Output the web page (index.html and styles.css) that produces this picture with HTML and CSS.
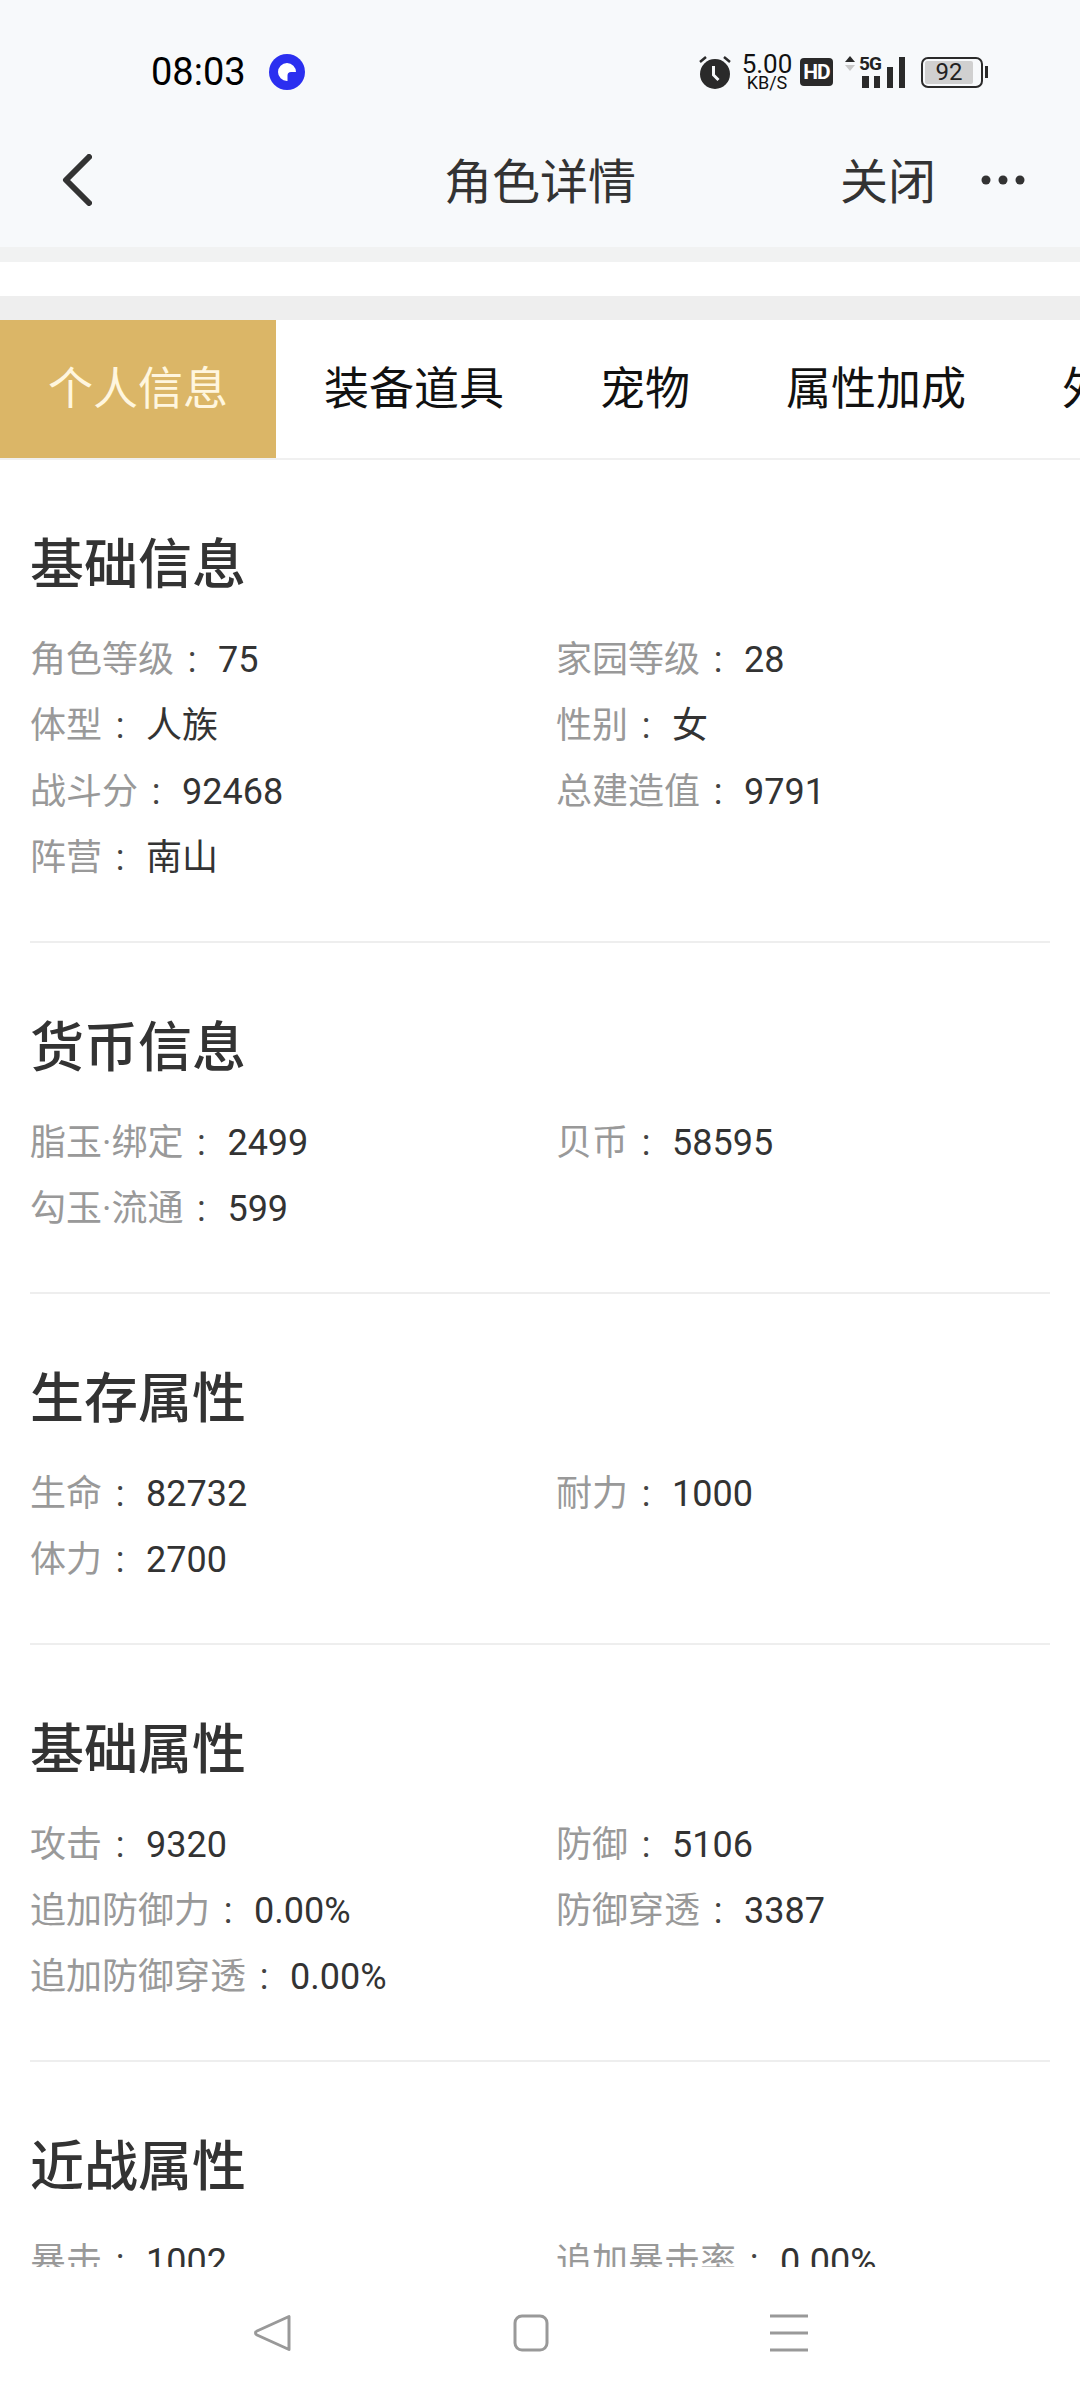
FILE: index.html
```html
<!DOCTYPE html>
<html>

<head>
  <title>角色详情</title>
  <link rel="stylesheet" href="styles.css">
</head>

<body>
  <div class="screen">
    <div class="topbar">
      <div class="status">
        <span class="time">08:03</span>
        <svg class="app-dot" width="36" height="36" viewBox="0 0 36 36">
          <circle cx="18" cy="18" r="18" fill="#2b2ff0" />
          <path d="M18 9a9 9 0 0 1 9 9h-5a3.500 3.500 0 0 0-3.500 3.500V27H18a9 9 0 0 1 0-18z" fill="#fff" />
        </svg>
        <div class="status-right">
          <svg width="34" height="36" viewBox="0 0 34 36">
            <circle cx="17" cy="20" r="15" fill="#2a2a2a" />
            <path d="M15.500 12v9l5 5" fill="none" stroke="#f7f9fb" stroke-width="3" />
            <path d="M2 8l6-5M32 8l-6-5" stroke="#2a2a2a" stroke-width="2.500" fill="none" />
          </svg>
          <div class="speed"><span class="speed-num">5.00</span><span class="speed-unit">KB/S</span></div>
          <span class="hd">HD</span>
          <div class="signal">
            <svg class="arrows" width="10" height="16" viewBox="0 0 10 16">
              <path d="M5 0l5 6H0z" fill="#2a2a2a" />
              <path d="M5 15l5-6H0z" fill="#c8c8c8" />
            </svg>
            <span class="five-g">5G</span>
            <svg class="bars" width="44" height="32" viewBox="0 0 44 32">
              <rect x="0" y="20" width="7" height="12" fill="#2a2a2a" />
              <rect x="12" y="20" width="6" height="12" fill="#2a2a2a" />
              <rect x="25" y="11" width="6" height="21" fill="#2a2a2a" />
              <rect x="37" y="1" width="6" height="31" fill="#2a2a2a" />
            </svg>
          </div>
          <div class="battery">
            <div class="battery-body"><span class="battery-level">92</span></div>
            <div class="battery-cap"></div>
          </div>
        </div>
      </div>
      <div class="navrow">
        <svg class="back" width="30" height="52" viewBox="0 0 30 52">
          <path d="M27 3L4 26l23 23" fill="none" stroke="#333" stroke-width="6" stroke-linecap="round" stroke-linejoin="round" />
        </svg>
        <span class="nav-title">角色详情</span>
        <span class="nav-close">关闭</span>
        <svg class="more" width="44" height="10" viewBox="0 0 44 10">
          <circle cx="5" cy="5" r="4.500" fill="#333" />
          <circle cx="22" cy="5" r="4.500" fill="#333" />
          <circle cx="39" cy="5" r="4.500" fill="#333" />
        </svg>
      </div>
    </div>
    <div class="strip"></div>
    <div class="gap-white"></div>
    <div class="gap-grey"></div>

    <div class="tabs">
      <div class="tab active">个人信息</div>
      <div class="tab">装备道具</div>
      <div class="tab">宠物</div>
      <div class="tab">属性加成</div>
      <div class="tab">外观</div>
    </div>

    <div class="content">
      <div class="section">
        <h2 class="section-title">基础信息</h2>
        <div class="grid">
          <div class="item"><span class="label">角色等级<span class="colon">:</span></span><span class="value">75</span></div>
          <div class="item"><span class="label">家园等级<span class="colon">:</span></span><span class="value">28</span></div>
          <div class="item"><span class="label">体型<span class="colon">:</span></span><span class="value">人族</span></div>
          <div class="item"><span class="label">性别<span class="colon">:</span></span><span class="value">女</span></div>
          <div class="item"><span class="label">战斗分<span class="colon">:</span></span><span class="value">92468</span></div>
          <div class="item"><span class="label">总建造值<span class="colon">:</span></span><span class="value">9791</span></div>
          <div class="item"><span class="label">阵营<span class="colon">:</span></span><span class="value">南山</span></div>
        </div>
      </div>
      <div class="section">
        <h2 class="section-title">货币信息</h2>
        <div class="grid">
          <div class="item"><span class="label">脂玉·绑定<span class="colon">:</span></span><span class="value">2499</span></div>
          <div class="item"><span class="label">贝币<span class="colon">:</span></span><span class="value">58595</span></div>
          <div class="item"><span class="label">勾玉·流通<span class="colon">:</span></span><span class="value">599</span></div>
        </div>
      </div>
      <div class="section">
        <h2 class="section-title">生存属性</h2>
        <div class="grid">
          <div class="item"><span class="label">生命<span class="colon">:</span></span><span class="value">82732</span></div>
          <div class="item"><span class="label">耐力<span class="colon">:</span></span><span class="value">1000</span></div>
          <div class="item"><span class="label">体力<span class="colon">:</span></span><span class="value">2700</span></div>
        </div>
      </div>
      <div class="section">
        <h2 class="section-title">基础属性</h2>
        <div class="grid">
          <div class="item"><span class="label">攻击<span class="colon">:</span></span><span class="value">9320</span></div>
          <div class="item"><span class="label">防御<span class="colon">:</span></span><span class="value">5106</span></div>
          <div class="item"><span class="label">追加防御力<span class="colon">:</span></span><span class="value">0.00%</span></div>
          <div class="item"><span class="label">防御穿透<span class="colon">:</span></span><span class="value">3387</span></div>
          <div class="item"><span class="label">追加防御穿透<span class="colon">:</span></span><span class="value">0.00%</span></div>
        </div>
      </div>
      <div class="section">
        <h2 class="section-title">近战属性</h2>
        <div class="grid">
          <div class="item"><span class="label">暴击<span class="colon">:</span></span><span class="value">1002</span></div>
          <div class="item"><span class="label">追加暴击率<span class="colon">:</span></span><span class="value">0.00%</span></div>
        </div>
      </div>
    </div>

    <div class="sysnav">
      <svg width="38" height="38" viewBox="0 0 38 38">
        <path d="M35 2.500v33L3 21c-2-1-2-3 0-4z" fill="none" stroke="#999" stroke-width="3" stroke-linejoin="round" />
      </svg>
      <svg width="36" height="38" viewBox="0 0 36 38">
        <rect x="2" y="2" width="32" height="34" rx="7" fill="none" stroke="#999" stroke-width="3" />
      </svg>
      <svg width="38" height="38" viewBox="0 0 38 38">
        <path d="M0 2h38M0 19h38M0 36h38" stroke="#999" stroke-width="3" fill="none" />
      </svg>
    </div>
  </div>
</body>

</html>
```

FILE: styles.css
```css
* {
  box-sizing: border-box;
}

body {
  margin: 0;
  background-color: #fff;
  font-family: Roboto, "Noto Sans CJK SC", sans-serif;
  color: #333;
}

.screen {
  width: 1080px;
  height: 2400px;
  display: flex;
  flex-direction: column;
  overflow: hidden;
}

.topbar {
  height: 247px;
  background-color: #f7f9fb;
  flex-shrink: 0;
}

.status {
  height: 144px;
  display: flex;
  align-items: center;
  padding: 0 92px 0 151px;
}

.time {
  font-size: 38px;
  color: #000;
  width: 118px;
}

.status-right {
  margin-left: auto;
  display: flex;
  align-items: center;
  gap: 9px;
}

.speed {
  display: flex;
  flex-direction: column;
  align-items: center;
  color: #111;
  width: 52px;
  margin-top: 2px;
  margin-right: -2px;
}

.speed-num {
  font-size: 26px;
  line-height: 20px;
}

.speed-unit {
  font-size: 18px;
  line-height: 18px;
}

.hd {
  width: 33px;
  height: 28px;
  border-radius: 4px;
  background-color: #2a2a2a;
  color: #fff;
  font-size: 21px;
  font-weight: 700;
  line-height: 28px;
  text-align: center;
  letter-spacing: -1px;
}

.signal {
  width: 62px;
  height: 32px;
  position: relative;
  margin-left: 2px;
}

.arrows {
  position: absolute;
  left: 1px;
  top: 0;
}

.five-g {
  position: absolute;
  left: 15px;
  top: -2px;
  font-size: 19px;
  font-weight: 700;
  line-height: 19px;
  color: #222;
  letter-spacing: -1px;
}

.bars {
  position: absolute;
  right: 0;
  bottom: 0;
}

.battery {
  display: flex;
  align-items: center;
  gap: 2px;
  margin-left: 6px;
}

.battery-body {
  width: 62px;
  height: 31px;
  border: 2.500px solid #2a2a2a;
  border-radius: 7px;
  padding: 2px;
}

.battery-level {
  display: block;
  width: 48px;
  height: 100%;
  background-color: #d0d0d0;
  border-radius: 2px;
  font-size: 24px;
  line-height: 22px;
  text-align: center;
  color: #222;
}

.battery-cap {
  width: 3px;
  height: 12px;
  background-color: #2a2a2a;
}

.navrow {
  height: 72px;
  display: flex;
  align-items: center;
  position: relative;
  padding: 0 55px 0 62px;
}

.nav-title {
  position: absolute;
  left: 300px;
  right: 300px;
  text-align: center;
  font-size: 48px;
  color: #333;
  padding-bottom: 4px;
}

.nav-close {
  margin-left: auto;
  font-size: 48px;
  color: #333;
  margin-right: 45px;
  padding-bottom: 4px;
}

.strip {
  height: 15px;
  background-color: #f1f2f2;
  flex-shrink: 0;
}

.gap-white {
  height: 34px;
  flex-shrink: 0;
}

.gap-grey {
  height: 24px;
  background-color: #eeeeee;
  flex-shrink: 0;
}

.tabs {
  height: 140px;
  display: flex;
  flex-shrink: 0;
  border-bottom: 2px solid #f0f0f0;
  overflow: hidden;
}

.tab {
  height: 138px;
  padding: 1px 48px 0;
  font-size: 45px;
  line-height: 138px;
  color: #111;
  white-space: nowrap;
  flex-shrink: 0;
}

.tab.active {
  background-color: #dbb667;
  color: #fff6df;
}

.content {
  flex: 1;
  overflow: hidden;
  padding: 0 30px;
}

.section {
  padding: 70px 0 50px;
  border-bottom: 2px solid #eeeeee;
}

.section-title {
  margin: 0 0 25px;
  font-size: 54px;
  font-weight: 500;
  line-height: 72px;
  color: #333;
}

.grid {
  display: grid;
  grid-template-columns: 526px 1fr;
}

.item {
  height: 66px;
  font-size: 36px;
  line-height: 66px;
  white-space: nowrap;
}

.label {
  color: #999;
  margin-right: 8px;
}

.colon {
  display: inline-block;
  width: 36px;
  text-align: center;
  line-height: 1;
  color: #444;
}

.value {
  color: #333;
}

.sysnav {
  height: 133px;
  flex-shrink: 0;
  background-color: #fff;
  display: flex;
  padding: 47px 272px 0 254px;
  justify-content: space-between;
  align-items: flex-start;
}
```
